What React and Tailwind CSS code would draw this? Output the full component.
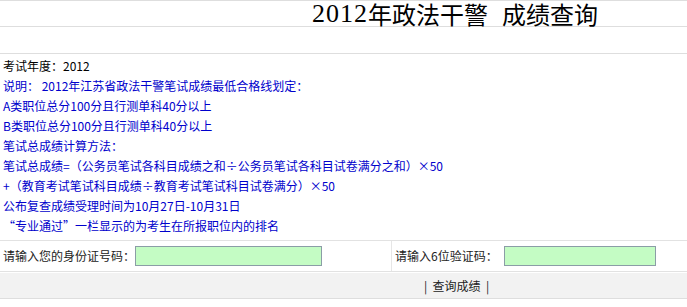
import React from 'react';

const body = { fontFamily: '"Noto Sans CJK SC", "Liberation Sans", sans-serif' };

const lines = [
  '说明： 2012年江苏省政法干警笔试成绩最低合格线划定：',
  'A类职位总分100分且行测单科40分以上',
  'B类职位总分100分且行测单科40分以上',
  '笔试总成绩计算方法：',
  '笔试总成绩=（公务员笔试各科目成绩之和÷公务员笔试各科目试卷满分之和）×50',
  '+（教育考试笔试科目成绩÷教育考试笔试科目试卷满分）×50',
  '公布复查成绩受理时间为10月27日-10月31日',
  '“专业通过”一栏显示的为考生在所报职位内的排名',
];

export default function App() {
  return (
    <div className="w-[687px] h-[307px] bg-white overflow-hidden text-[12px]" style={body}>
      <div className="border-t border-[#dedede]">
        <div className="h-[26px] border-b border-[#dedede] pl-[312px] flex items-center leading-[26px] text-black whitespace-nowrap">
          <span className="text-[26px] tracking-[1px]" style={{ fontFamily: '"Liberation Serif", serif' }}>2012</span>
          <span className="text-[24px]">年政法干警</span>
          <span className="text-[24px] ml-[14px]">成绩查询</span>
        </div>
        <div className="h-[27px] border-b border-[#dedede]" />
      </div>

      <div className="pt-[2px] pb-[4px] pl-[3px] leading-[20px] border-b border-[#e2e2e2]">
        <div className="text-black">考试年度：2012</div>
        {lines.map((t, i) => (
          <div key={i} className="text-[#0000cc] whitespace-nowrap">{t}</div>
        ))}
      </div>

      <div className="flex h-[31px] border-b border-[#e2e2e2] text-[#222]">
        <div className="w-[392px] flex items-center pl-[3px] border-r border-[#e6e6e6]">
          <span>请输入您的身份证号码：</span>
          <div className="w-[187px] h-[20px] bg-[#c4fcc4] border border-[#8b9da6]" />
        </div>
        <div className="flex-1 flex items-center pl-[3px]">
          <span>请输入6位验证码：</span>
          <div className="ml-[6px] w-[152px] h-[20px] bg-[#c4fcc4] border border-[#8b9da6]" />
        </div>
      </div>

      <div className="mt-[1px] h-[26px] bg-[#f2f2f2] border-b border-[#dedede] flex items-center pl-[424px] text-[#222]">
        <span>|&nbsp;&nbsp;查询成绩&nbsp;&nbsp;|</span>
      </div>
    </div>
  );
}
